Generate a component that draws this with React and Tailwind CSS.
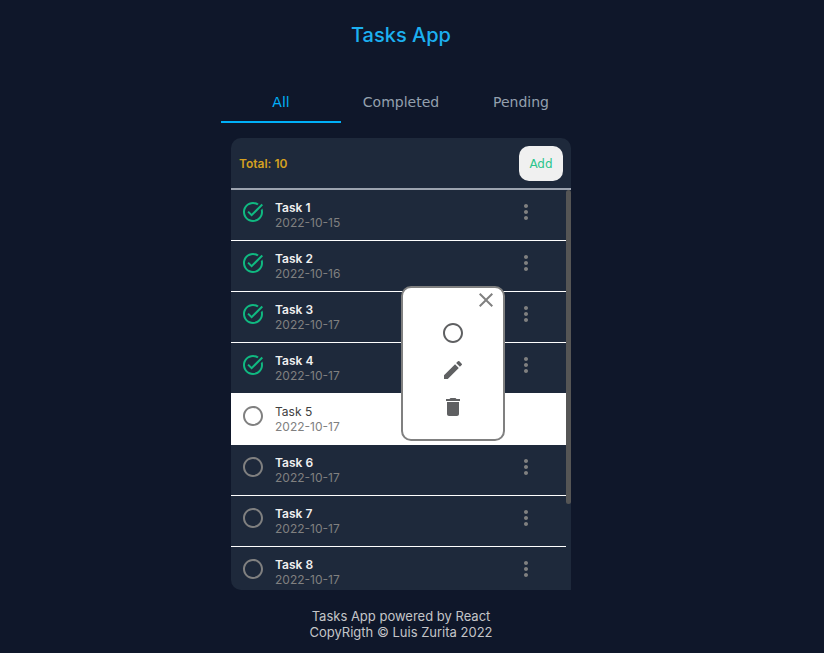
import { useState } from "react";
import {
  MdTaskAlt,
  MdRadioButtonUnchecked,
  MdMoreVert,
  MdEdit,
  MdDelete,
  MdClose,
} from "react-icons/md";

const TABS = ["All", "Completed", "Pending"];

const TASKS = [
  { id: 1, name: "Task 1", date: "2022-10-15", done: true },
  { id: 2, name: "Task 2", date: "2022-10-16", done: true },
  { id: 3, name: "Task 3", date: "2022-10-17", done: true },
  { id: 4, name: "Task 4", date: "2022-10-17", done: true },
  { id: 5, name: "Task 5", date: "2022-10-17", done: false },
  { id: 6, name: "Task 6", date: "2022-10-17", done: false },
  { id: 7, name: "Task 7", date: "2022-10-17", done: false },
  { id: 8, name: "Task 8", date: "2022-10-17", done: false },
  { id: 9, name: "Task 9", date: "2022-10-17", done: false },
  { id: 10, name: "Task 10", date: "2022-10-17", done: false },
];

function TaskMenu({ onClose }) {
  return (
    <div className="absolute -top-27 right-[61px] z-10 flex h-[155px] w-26 flex-col items-center rounded-[10px] border-2 border-[#808080] bg-white text-2xl text-[#5f6062]">
      <button
        type="button"
        aria-label="Close"
        onClick={onClose}
        className="mr-[5px] self-end text-[#808080]"
      >
        <MdClose />
      </button>
      <div className="flex flex-col gap-[13px] pt-[9px]">
        <button type="button" aria-label="Mark as completed">
          <MdRadioButtonUnchecked />
        </button>
        <button type="button" aria-label="Edit">
          <MdEdit />
        </button>
        <button type="button" aria-label="Delete">
          <MdDelete />
        </button>
      </div>
    </div>
  );
}

function TaskRow({ task, open, onOpen, onClose }) {
  return (
    <li
      className={`relative flex h-[51px] items-start gap-2.5 border-b border-white pt-2.5 pl-2.5 ${
        open ? "bg-white" : ""
      }`}
    >
      {task.done ? (
        <MdTaskAlt className="size-6 shrink-0 text-[#10b981]" />
      ) : (
        <MdRadioButtonUnchecked className="size-6 shrink-0 text-[#808080]" />
      )}
      <div className="grow text-xs leading-[15px]">
        <p className={open ? "text-[#404040]" : "font-semibold text-[#f0f0f0]"}>
          {task.name}
        </p>
        <p className="text-[#808080]">{task.date}</p>
      </div>
      {!open && (
        <button
          type="button"
          aria-label={`Options for ${task.name}`}
          onClick={onOpen}
          className="mr-7 text-2xl text-[#808080]"
        >
          <MdMoreVert />
        </button>
      )}
      {open && <TaskMenu onClose={onClose} />}
    </li>
  );
}

export default function App() {
  const [tab, setTab] = useState("All");
  const [openId, setOpenId] = useState(5);
  const shown = TASKS.filter(
    (t) => tab === "All" || t.done === (tab === "Completed")
  );

  return (
    <div className="flex min-h-screen flex-col items-center bg-[#0f172a] pr-[22px] font-['Inter',sans-serif]">
      <h1 className="pt-5 text-xl leading-[30px] font-medium text-[#1cb0f0]">
        Tasks App
      </h1>

      <nav className="mt-[30px] grid w-full max-w-[360px] grid-cols-3 font-['DejaVu_Sans',sans-serif] text-sm">
        {TABS.map((name) => (
          <button
            key={name}
            type="button"
            onClick={() => setTab(name)}
            className={`h-[43px] border-b-2 pt-0.5 ${
              tab === name
                ? "border-[#00b0f8] text-[#00b0f8]"
                : "border-transparent text-[#94a0ae]"
            }`}
          >
            {name}
          </button>
        ))}
      </nav>

      <main className="mt-[15px] w-full max-w-[340px] overflow-hidden rounded-t-[10px] rounded-bl-[10px] bg-[#1e293b]">
        <header className="flex items-center justify-between border-b-2 border-[#9ca3af] px-2 pt-2 pb-[7px]">
          <p className="text-xs font-semibold text-[#d4a020]">
            Total: {TASKS.length}
          </p>
          <button
            type="button"
            className="h-[35px] w-11 rounded-[10px] bg-[#f0f0f0] font-['DejaVu_Sans',sans-serif] text-xs text-[#2cc58c]"
          >
            Add
          </button>
        </header>
        <div className="flex h-[400px]">
          <ul className="grow overflow-y-auto [scrollbar-width:none]">
            {shown.map((task) => (
              <TaskRow
                key={task.id}
                task={task}
                open={task.id === openId}
                onOpen={() => setOpenId(task.id)}
                onClose={() => setOpenId(null)}
              />
            ))}
          </ul>
          <div className="w-[5px] shrink-0">
            <div className="h-[314px] rounded-[5px] bg-[#555555]" />
          </div>
        </div>
      </main>

      <footer className="pt-[18px] text-center text-[13px] leading-4 text-[#c4c5c8]">
        <p>Tasks App powered by React</p>
        <p>CopyRigth © Luis Zurita 2022</p>
      </footer>
    </div>
  );
}
